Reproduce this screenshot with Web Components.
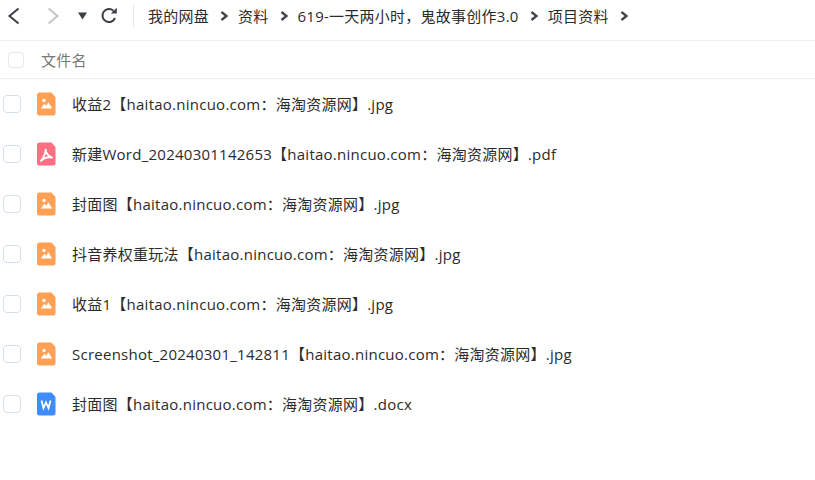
<!DOCTYPE html>
<html lang="zh">
<head>
<meta charset="utf-8">
<title>项目资料</title>
<style>
  html, body { margin: 0; background: #fff; }
  body { font-family: "Open Sans", "Noto Sans CJK SC", sans-serif; color: #2b2b2b; overflow: hidden; letter-spacing: .25px; }
</style>
</head>
<body>
<template id="crumb-bar-tpl">
  <style>
    :host { display: flex; align-items: flex-start; height: 40px; border-bottom: 1px solid #f0f0f0; }
    .nav { display: flex; align-items: center; width: 133px; height: 32px; flex: none; }
    svg { display: block; flex: none; }
    .back { margin-left: 7px; }
    .forward { margin-left: 27px; }
    .drop { margin-left: 18px; }
    .reload { margin-left: 13px; }
    .divider { width: 1px; height: 22px; margin-top: 5px; background: #e8e8e8; flex: none; }
    .path { display: flex; align-items: center; height: 32px; margin-left: 14px; font-size: 15px; white-space: nowrap; }
  </style>
  <div class="nav">
    <svg class="back" width="13" height="18" viewBox="0 0 13 18"><path d="M11.500 1.500 2.500 9l9 7.500" fill="none" stroke="#3b3f46" stroke-width="2"/></svg>
    <svg class="forward" width="13" height="18" viewBox="0 0 13 18"><path d="M1.500 1.500 10.500 9l-9 7.500" fill="none" stroke="#c4c6ca" stroke-width="2"/></svg>
    <svg class="drop" width="9" height="8" viewBox="0 0 9 8"><path d="M0 .5h9L4.500 7.500z" fill="#3b3f46"/></svg>
    <svg class="reload" width="18" height="18" viewBox="0 0 18 18"><path d="M15 11A6.500 6.500 0 1 1 13.400 3.800" fill="none" stroke="#3b3f46" stroke-width="2"/><path d="M10.800 6.400h6V.8z" fill="#3b3f46"/></svg>
  </div>
  <div class="divider"></div>
  <div class="path"><slot></slot></div>
</template>

<template id="crumb-item-tpl">
  <style>
    :host { display: flex; align-items: center; }
    .text { padding-bottom: 2px; }
    svg { display: block; margin: 0 10px 0 11px; }
  </style>
  <span class="text"><slot></slot></span>
  <svg width="8" height="12" viewBox="0 0 8 12"><path d="M1.500 2 6.500 6l-5 4" fill="none" stroke="#41444c" stroke-width="2.400"/></svg>
</template>

<template id="list-head-tpl">
  <style>
    :host { display: flex; align-items: center; height: 37px; border-bottom: 1px solid #f0f0f0; font-size: 15px; color: #777; }
    .check { width: 14px; height: 14px; margin-left: 8px; border: 1px solid #e6e8ec; border-radius: 4px; flex: none; }
    .label { margin-left: 17px; }
  </style>
  <div class="check"></div>
  <div class="label"><slot></slot></div>
</template>

<template id="file-row-tpl">
  <style>
    :host { display: flex; align-items: center; height: 50px; font-size: 15px; white-space: nowrap; }
    .check { width: 16px; height: 16px; margin-left: 3px; border: 1px solid #d5dfe8; border-radius: 4px; flex: none; }
    .icon { margin-left: 15px; flex: none; display: block; }
    .name { margin-left: 16px; padding-bottom: 2px; }
  </style>
  <div class="check"></div>
  <svg class="icon" width="20" height="24" viewBox="0 0 20 24"></svg>
  <div class="name"><slot></slot></div>
</template>

<script>
class CrumbBar extends HTMLElement {
  constructor() {
    super();
    this.attachShadow({mode: 'open'});
    this.shadowRoot.appendChild(document.getElementById('crumb-bar-tpl').content.cloneNode(true));
  }
}

class CrumbItem extends HTMLElement {
  constructor() {
    super();
    this.attachShadow({mode: 'open'});
    this.shadowRoot.appendChild(document.getElementById('crumb-item-tpl').content.cloneNode(true));
  }
}

class ListHead extends HTMLElement {
  constructor() {
    super();
    this.attachShadow({mode: 'open'});
    this.shadowRoot.appendChild(document.getElementById('list-head-tpl').content.cloneNode(true));
  }
}

const FILE_ICONS = {
  img: {
    color: '#ffa055',
    glyph: '<circle cx="8" cy="8.500" r="1.700" fill="#fff"/><path d="M4.800 16.500 8.300 11.800 10.300 13.800 12.300 10.300 16.200 16.500z" fill="#fff"/>'
  },
  pdf: {
    color: '#ff6f81',
    glyph: '<path d="M9.500 7.500c.5 3.500 2.500 6.500 6.500 8-4-.8-8 .3-11 3.500 2.500-3.500 4.500-7 4.500-11.500z" fill="none" stroke="#fff" stroke-width="1.800" stroke-linejoin="round"/>'
  },
  word: {
    color: '#3f8cfb',
    glyph: '<path d="M5.500 8.500 7.500 16 10 10.500 12.500 16 14.500 8.500" fill="none" stroke="#fff" stroke-width="1.800"/>'
  }
};

class FileRow extends HTMLElement {
  constructor() {
    super();
    this.attachShadow({mode: 'open'});
    this.shadowRoot.appendChild(document.getElementById('file-row-tpl').content.cloneNode(true));
  }

  connectedCallback() {
    const icon = FILE_ICONS[this.getAttribute('type')] || FILE_ICONS.img;
    this.shadowRoot.querySelector('.icon').innerHTML =
      `<path d="M3.500 .5H15.500l4 4.500v16a2.500 2.500 0 0 1-2.500 2.500H3.500A2.500 2.500 0 0 1 1 21V3A2.500 2.500 0 0 1 3.500 .5z" fill="${icon.color}"/>${icon.glyph}`;
  }
}

customElements.define('crumb-bar', CrumbBar);
customElements.define('crumb-item', CrumbItem);
customElements.define('list-head', ListHead);
customElements.define('file-row', FileRow);
</script>

<crumb-bar>
  <crumb-item>我的网盘</crumb-item>
  <crumb-item>资料</crumb-item>
  <crumb-item>619-一天两小时，鬼故事创作3.0</crumb-item>
  <crumb-item>项目资料</crumb-item>
</crumb-bar>
<list-head>文件名</list-head>
<file-row type="img">收益2【haitao.nincuo.com：海淘资源网】.jpg</file-row>
<file-row type="pdf">新建Word_20240301142653【haitao.nincuo.com：海淘资源网】.pdf</file-row>
<file-row type="img">封面图【haitao.nincuo.com：海淘资源网】.jpg</file-row>
<file-row type="img">抖音养权重玩法【haitao.nincuo.com：海淘资源网】.jpg</file-row>
<file-row type="img">收益1【haitao.nincuo.com：海淘资源网】.jpg</file-row>
<file-row type="img">Screenshot_20240301_142811【haitao.nincuo.com：海淘资源网】.jpg</file-row>
<file-row type="word">封面图【haitao.nincuo.com：海淘资源网】.docx</file-row>
</body>
</html>
